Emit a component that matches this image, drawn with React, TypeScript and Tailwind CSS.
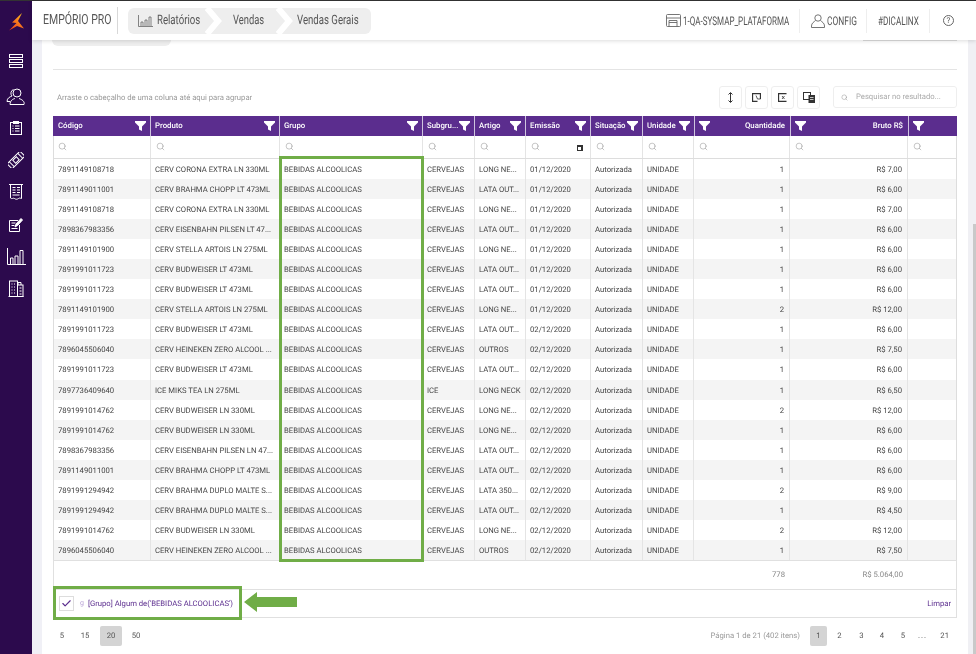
import React from 'react';
import { Search, Check } from 'lucide-react';

const cols = 'grid grid-cols-[98px_129px_143px_52px_51px_65px_52px_51px_96px_118px_49px]';

const rows = [
  ['7891149108718', 'CERV CORONA EXTRA LN 330ML', 'LONG NE...', '01/12/2020', '1', 'R$ 7,00', 'CERVEJAS'],
  ['7891149011001', 'CERV BRAHMA CHOPP LT 473ML', 'LATA OUT...', '01/12/2020', '1', 'R$ 6,00', 'CERVEJAS'],
  ['7891149108718', 'CERV CORONA EXTRA LN 330ML', 'LONG NE...', '01/12/2020', '1', 'R$ 7,00', 'CERVEJAS'],
  ['7898367983356', 'CERV EISENBAHN PILSEN LT 47...', 'LATA OUT...', '01/12/2020', '1', 'R$ 6,00', 'CERVEJAS'],
  ['7891149101900', 'CERV STELLA ARTOIS LN 275ML', 'LONG NE...', '01/12/2020', '1', 'R$ 6,00', 'CERVEJAS'],
  ['7891991011723', 'CERV BUDWEISER LT 473ML', 'LATA OUT...', '01/12/2020', '1', 'R$ 6,00', 'CERVEJAS'],
  ['7891991011723', 'CERV BUDWEISER LT 473ML', 'LATA OUT...', '01/12/2020', '1', 'R$ 6,00', 'CERVEJAS'],
  ['7891149101900', 'CERV STELLA ARTOIS LN 275ML', 'LONG NE...', '01/12/2020', '2', 'R$ 12,00', 'CERVEJAS'],
  ['7891991011723', 'CERV BUDWEISER LT 473ML', 'LATA OUT...', '02/12/2020', '1', 'R$ 6,00', 'CERVEJAS'],
  ['7896045506040', 'CERV HEINEKEN ZERO ALCOOL ...', 'OUTROS', '02/12/2020', '1', 'R$ 7,50', 'CERVEJAS'],
  ['7891991011723', 'CERV BUDWEISER LT 473ML', 'LATA OUT...', '02/12/2020', '1', 'R$ 6,00', 'CERVEJAS'],
  ['7897736409640', 'ICE MIKS TEA LN 275ML', 'LONG NECK', '02/12/2020', '1', 'R$ 6,50', 'ICE'],
  ['7891991014762', 'CERV BUDWEISER LN 330ML', 'LONG NE...', '02/12/2020', '2', 'R$ 12,00', 'CERVEJAS'],
  ['7891991014762', 'CERV BUDWEISER LN 330ML', 'LONG NE...', '02/12/2020', '1', 'R$ 6,00', 'CERVEJAS'],
  ['7898367983356', 'CERV EISENBAHN PILSEN LN 47...', 'LATA OUT...', '02/12/2020', '1', 'R$ 6,00', 'CERVEJAS'],
  ['7891149011001', 'CERV BRAHMA CHOPP LT 473ML', 'LATA OUT...', '02/12/2020', '1', 'R$ 6,00', 'CERVEJAS'],
  ['7891991294942', 'CERV BRAHMA DUPLO MALTE S...', 'LATA 350...', '02/12/2020', '2', 'R$ 9,00', 'CERVEJAS'],
  ['7891991294942', 'CERV BRAHMA DUPLO MALTE S...', 'LATA OUT...', '02/12/2020', '1', 'R$ 4,50', 'CERVEJAS'],
  ['7891991014762', 'CERV BUDWEISER LN 330ML', 'LONG NE...', '02/12/2020', '2', 'R$ 12,00', 'CERVEJAS'],
  ['7896045506040', 'CERV HEINEKEN ZERO ALCOOL ...', 'OUTROS', '02/12/2020', '1', 'R$ 7,50', 'CERVEJAS'],
];

const Funnel = () => (
  <svg width="11" height="10" viewBox="0 0 11 10" className="shrink-0">
    <path d="M0 0h11v1.6L7 5.4V10L4 8.4v-3L0 1.6z" fill="#fff" />
  </svg>
);

const ico = { fill: 'none', stroke: '#fff', strokeWidth: 1 };

const sideIcons = [
  <svg key="a" width="14" height="14" viewBox="0 0 14 14" {...ico}>
    <rect x="0.5" y="0.5" width="13" height="3" /><rect x="0.5" y="5.5" width="13" height="3" /><rect x="0.5" y="10.5" width="13" height="3" />
  </svg>,
  <svg key="b" width="20" height="17" viewBox="0 0 20 17" {...ico}>
    <circle cx="11" cy="5" r="4" /><path d="M4 16.5c0-4 3-5.500 5-6M18 16.500H4M18 16.500c1-3-2-5-5-6" />
    <path d="M7.500 1.500a4 4 0 0 0-1.500 6.500c-2 .8-5 2-5 5.500h3" />
  </svg>,
  <svg key="c" width="12" height="14" viewBox="0 0 12 14" {...ico}>
    <rect x="0.500" y="1.500" width="11" height="12" /><rect x="3.500" y="0.500" width="5" height="2" fill="#fff" />
    <path d="M5 5h4.500M5 7.500h4.500M5 10h4.500M2.500 5h1M2.500 7.500h1M2.500 10h1" />
  </svg>,
  <svg key="d" width="16" height="16" viewBox="0 0 16 16" {...ico}>
    <g transform="rotate(-45 8 8)">
      <rect x="-1" y="4.500" width="18" height="7" /><rect x="5.500" y="6" width="5" height="4" />
      <path d="M2 4.500v7M14 4.500v7" />
    </g>
  </svg>,
  <svg key="e" width="14" height="16" viewBox="0 0 14 16" {...ico}>
    <path d="M0 .5h14M1.500.5v13.500c1.500 1.500 2.500-.5 4 .5s2.500 1 4 0 2 0 3 0V.5" />
    <path d="M3.500 3.500h3M8 3.500h3M3.500 6h3M8 6h3M3.500 8.500h3M8 8.500h3M3.500 11h7" />
  </svg>,
  <svg key="f" width="14" height="15" viewBox="0 0 14 15" {...ico}>
    <path d="M9 3.500H.5v11h10V8" /><path d="M2.500 6h4M2.500 8.500h3M2.500 11.500h6" />
    <path d="M6 10l1-3 5-5.500 1.500 1.500-5 5.500z" fill="#fff" />
  </svg>,
  <svg key="g" width="19" height="17" viewBox="0 0 19 17" {...ico}>
    <path d="M.5 0v16.500h18.500" /><path d="M3.500 16v-6h2.500v6M8 16V8h3v8M13 16V2.500h3V16" />
  </svg>,
  <svg key="h" width="16" height="17" viewBox="0 0 16 17" {...ico}>
    <path d="M.5 16.500h15" /><rect x="1.500" y="1" width="8" height="15.500" /><rect x="9.500" y="5" width="5.500" height="11.500" />
    <path d="M3.500 4h1M6 4h1M3.500 7h1M6 7h1M3.500 10h1M6 10h1M3.500 13h1M6 13h1M11.500 8h2M11.500 11h2M11.500 14h2" />
    <path d="M10 5V2.500h3V5" />
  </svg>,
];

const Chevron = () => (
  <svg width="20" height="26" viewBox="0 0 20 26" className="shrink-0">
    <polyline points="3,0 14,13 3,26" fill="none" stroke="#fff" strokeWidth="6" />
  </svg>
);

const ToolBtn = ({ children }: { children: React.ReactNode }) => (
  <button className="w-[23px] h-[23px] border border-[#eeeeee] rounded-[3px] flex items-center justify-center bg-white">
    {children}
  </button>
);

export default function App() {
  return (
    <div className="w-[976px] h-[654px] overflow-hidden flex flex-col bg-white font-['Roboto',sans-serif] [text-rendering:geometricPrecision]">
      <div className="h-px bg-[#333333] shrink-0"></div>
      <div className="flex flex-1 min-h-0">
        {/* Sidebar */}
        <aside className="w-8 bg-[#2c0a4d] shrink-0 flex flex-col items-center">
          <div className="h-[44px] pt-[12px] shrink-0">
            <svg width="15" height="18" viewBox="0 0 15 18">
              <defs>
                <linearGradient id="lg" x1="0" y1="1" x2="0.6" y2="0">
                  <stop offset="0" stopColor="#ee3a1c" />
                  <stop offset="0.6" stopColor="#f7791d" />
                  <stop offset="1" stopColor="#fdb71d" />
                </linearGradient>
              </defs>
              <path d="M13 0L3 9.500l4.500.5L0 17.500 8 13l7 2.500L9 8z" fill="url(#lg)" />
            </svg>
          </div>
          {sideIcons.map((icon, i) => (
            <div key={i} className={`h-8 w-full flex items-center justify-center shrink-0 ${i === 0 ? 'mb-[3px]' : ''}`}>
              {icon}
            </div>
          ))}
        </aside>

        <div className="flex-1 flex flex-col min-w-0">
          {/* Top bar */}
          <header className="h-[39px] shrink-0 bg-white flex items-center relative z-10 shadow-[0_1px_4px_rgba(0,0,0,0.14)] text-[#555555]">
            <div className="pl-[11px] w-[85px] shrink-0">
              <div className="text-[14px] whitespace-nowrap scale-x-[.75] origin-left">EMPÓRIO PRO</div>
            </div>
            <div className="w-px h-[27px] bg-[#d8d8d8] shrink-0"></div>
            <nav className="ml-[10px] h-[26px] w-[243px] shrink-0 bg-[#eeeeee] rounded-[6px] flex items-center overflow-hidden text-[13px]">
              <svg width="15" height="12" viewBox="0 0 15 12" fill="none" stroke="#666" strokeWidth="0.8" className="ml-[10px] shrink-0">
                <path d="M.5 0v11.500H15M3 11V7h2v4M7 11V5h2v6M11 11V2h2v9" />
              </svg>
              <span className="ml-[4px] w-[47px] shrink-0 whitespace-nowrap scale-x-[.74] origin-left">Relatórios</span>
              <Chevron />
              <span className="ml-[9px] w-[42px] shrink-0 whitespace-nowrap scale-x-[.72] origin-left">Vendas</span>
              <Chevron />
              <span className="ml-[2px] w-[62px] shrink-0 whitespace-nowrap scale-x-[.74] origin-left">Vendas Gerais</span>
            </nav>
            <div className="ml-auto flex items-center h-full text-[12px]">
              <svg width="15" height="13" viewBox="0 0 15 13" fill="none" stroke="#666" strokeWidth="0.9" className="shrink-0">
                <rect x="0.500" y="0.500" width="14" height="12" rx="1" /><path d="M.5 4h14M3 12.500V6.500h8v6M3 8.500h8" />
              </svg>
              <span className="ml-[2px] w-[116px] whitespace-nowrap scale-x-[.67] origin-left">1-QA-SYSMAP_PLATAFORMA</span>
              <div className="w-px h-[24px] bg-[#eeeeee]"></div>
              <svg width="14" height="14" viewBox="0 0 14 14" fill="none" stroke="#666" strokeWidth="0.9" className="ml-[11px] shrink-0">
                <circle cx="7" cy="4" r="3.200" /><path d="M4.500 6.500C3 8 .5 9 .5 12v1.500h13V12c0-3-2.500-4-4-5.500" />
              </svg>
              <span className="ml-[2px] w-[39px] whitespace-nowrap scale-x-[.7] origin-left">CONFIG</span>
              <div className="w-px h-[24px] bg-[#eeeeee]"></div>
              <span className="ml-[11px] w-[51px] whitespace-nowrap scale-x-[.68] origin-left">#DICALINX</span>
              <div className="w-px h-[24px] bg-[#eeeeee]"></div>
              <div className="ml-[13px] mr-[22px] w-[11px] h-[11px] rounded-full border border-[#666666] flex items-center justify-center text-[8px] leading-none">?</div>
            </div>
          </header>

          <div className="flex-1 flex min-h-0">
            <div className="w-[10px] bg-[#f0f0f6] shrink-0"></div>

            {/* Page */}
            <main className="flex-1 px-[11px] min-w-0 will-change-transform">
              <div className="flex justify-between items-start">
                <div className="w-[119px] h-[6px] bg-[#eeeeee] rounded-b-[6px] -ml-px"></div>
                <div className="w-[94px] h-px bg-[#dddddd]"></div>
              </div>
              <div className="mt-[23px] h-px bg-[#e4e4e4]"></div>

              <div className="mt-[16px] h-[23px] flex items-center">
                <span className="pl-[4px] text-[7.7px] text-[#999999]">Arraste o cabeçalho de uma coluna até aqui para agrupar</span>
                <div className="ml-auto flex gap-[3px]">
                  <ToolBtn>
                    <svg width="5" height="11" viewBox="0 0 5 11" fill="none" stroke="#333" strokeWidth="1">
                      <path d="M2.500 1v9M.5 2.500l2-2 2 2M.5 8.500l2 2 2-2" />
                    </svg>
                  </ToolBtn>
                  <ToolBtn>
                    <svg width="9" height="9" viewBox="0 0 9 9" fill="none" stroke="#333" strokeWidth="1.300">
                      <path d="M8.500 6V.5H.5v8h5" /><path d="M4 2.500l1.500 3.500h3" strokeWidth="0.800" />
                    </svg>
                  </ToolBtn>
                  <ToolBtn>
                    <svg width="9" height="9" viewBox="0 0 9 9" fill="none" stroke="#333" strokeWidth="1.300">
                      <path d="M8.500.5H.5v8h8" /><path d="M4 3l2.500 3M6.500 3L4 6" strokeWidth="0.800" />
                    </svg>
                  </ToolBtn>
                  <ToolBtn>
                    <svg width="12" height="11" viewBox="0 0 12 11" fill="none" stroke="#333" strokeWidth="1">
                      <rect x="0.500" y="0.500" width="7" height="7" /><rect x="6" y="3.500" width="5.500" height="7" fill="#333" />
                      <path d="M7 5.500h3.500M7 7.500h3.500" stroke="#fff" strokeWidth="0.700" />
                    </svg>
                  </ToolBtn>
                </div>
                <div className="ml-[13px] w-[124px] h-[22px] -mt-px border border-[#eeeeee] rounded-[3px] flex items-center pl-[7px]">
                  <Search size={7} strokeWidth={1.500} className="text-[#888888]" />
                  <span className="ml-[8px] text-[7.7px] text-[#aaaaaa]">Pesquisar no resultado...</span>
                </div>
              </div>

              {/* Grid */}
              <div className="relative mt-[7px] text-[7.7px] text-[#444444]">
                <div className={`${cols} h-[20px] bg-[#5b2d8e] text-white font-medium text-[7.8px]`}>
                  {['Código', 'Produto', 'Grupo', 'Subgru...', 'Artigo', 'Emissão', 'Situação', 'Unidade'].map((h, i) => (
                    <div key={h} className={`flex items-center justify-between pr-[4px] ${i === 0 ? 'pl-[5px]' : 'pl-[4px]'} ${i < 7 ? 'border-r border-[#cfc4de]' : ''}`}>
                      <span>{h}</span>
                      <Funnel />
                    </div>
                  ))}
                  {['Quantidade', 'Bruto R$'].map((h) => (
                    <div key={h} className="flex items-center justify-between pl-[4px] pr-[5px] border-l border-[#cfc4de]">
                      <Funnel />
                      <span>{h}</span>
                    </div>
                  ))}
                  <div className="flex items-center pl-[4px] border-l border-[#cfc4de]">
                    <Funnel />
                  </div>
                </div>

                <div className={`${cols} h-[22.500px] border-b border-[#dddddd] shadow-[inset_1px_0_#dddddd,inset_-1px_0_#dddddd]`}>
                  {Array.from({ length: 11 }).map((_, i) => (
                    <div key={i} className={`flex items-center justify-between pl-[5px] pr-[7px] ${i < 10 ? 'border-r border-[#e4e4e4]' : ''}`}>
                      <Search size={9} strokeWidth={1.300} className="text-[#888888]" />
                      {i === 5 && (
                        <svg width="6" height="6" viewBox="0 0 6 6" className="mt-[3px] shrink-0">
                          <path d="M0 0h6v6H0z" fill="#333" /><path d="M1 2h3v3H1z" fill="#fff" />
                        </svg>
                      )}
                    </div>
                  ))}
                </div>

                {rows.map((r, idx) => (
                  <div key={idx} className={`${cols} h-[20.100px] shadow-[inset_1px_0_#dddddd,inset_-1px_0_#dddddd] ${idx % 2 === 1 ? 'bg-[#f4f4f4]' : ''}`}>
                    {[r[0], r[1], 'BEBIDAS ALCOOLICAS', r[6], r[2], r[3], 'Autorizada', 'UNIDADE'].map((c, i) => (
                      <div key={i} className={`flex items-center pt-[1.500px] border-r border-[#e4e4e4] whitespace-nowrap overflow-hidden ${i === 0 ? 'pl-[5px]' : 'pl-[4px]'}`}>{c}</div>
                    ))}
                    <div className="flex items-center justify-end pt-[1.500px] pr-[5px] border-r border-[#e4e4e4]">{r[4]}</div>
                    <div className="flex items-center justify-end pt-[1.500px] pr-[5px] border-r border-[#e4e4e4]">{r[5]}</div>
                    <div></div>
                  </div>
                ))}

                <div className={`${cols} h-[28.500px] border-t border-[#e0e0e0] shadow-[inset_1px_0_#e0e0e0,inset_-1px_0_#e0e0e0] text-[#888888]`}>
                  <div className="col-span-9 flex items-center justify-end pr-[5px]">778</div>
                  <div className="flex items-center justify-end pr-[5px]">R$ 5.064,00</div>
                </div>

                <div className="h-[29px] border border-[#e0e0e0] flex items-center text-[#5b2d8e]">
                  <span className="ml-[5px] w-[15px] h-[15px] border border-[#dddddd] flex items-center justify-center">
                    <Check size={11} strokeWidth={2.500} className="text-[#5b2d8e]" />
                  </span>
                  <span className="ml-[6px] text-[7px] text-[#b9a3d6]">g</span>
                  <span className="ml-[4px] whitespace-nowrap">[Grupo] Algum de('BEBIDAS ALCOOLICAS')</span>
                  <span className="ml-auto mr-[5px]">Limpar</span>
                </div>

                <div className="h-[30px] mt-[3px] flex items-center text-[#555555]">
                  <div className="flex items-center">
                    <span className="w-[22px] text-center ml-[-2px]">5</span>
                    <span className="w-[22px] text-center ml-[1px] mr-[4px]">15</span>
                    <span className="w-[22px] h-[20px] bg-[#d4d4d4] rounded-[2px] flex items-center justify-center">20</span>
                    <span className="w-[28px] text-center">50</span>
                  </div>
                  <div className="ml-auto flex items-center">
                    <span className="text-[#999999] mr-[10px]">Página 1 de 21 (402 itens)</span>
                    <span className="w-[17px] h-[20px] bg-[#d4d4d4] rounded-[2px] flex items-center justify-center">1</span>
                    <span className="w-[25px] text-center">2</span>
                    <span className="w-[19px] text-center">3</span>
                    <span className="w-[22px] text-center">4</span>
                    <span className="w-[20px] text-center">5</span>
                    <span className="w-[19px] text-center tracking-[1px]">...</span>
                    <span className="w-[25px] text-right pr-[8px]">21</span>
                  </div>
                </div>

                {/* Highlights over the grid */}
                <div className="absolute left-[226px] top-[40px] w-[145px] h-[406px] border-[3px] border-[#70ad47] pointer-events-none"></div>
                <div className="absolute left-0 top-[470px] w-[189px] h-[34px] border-[3px] border-[#70ad47] pointer-events-none"></div>
                <svg width="53" height="20" viewBox="0 0 53 20" className="absolute left-[191px] top-[476px]">
                  <path d="M0 10L13 0v5h40v10H13v5z" fill="#70ad47" />
                </svg>
              </div>
            </main>

            {/* Scrollbar */}
            <div className="w-2 bg-[#f0f0f4] shrink-0 flex justify-end pt-[184px]">
              <div className="w-[3px] h-full bg-[#c9c9c9]"></div>
            </div>
          </div>
        </div>
      </div>
    </div>
  );
}
